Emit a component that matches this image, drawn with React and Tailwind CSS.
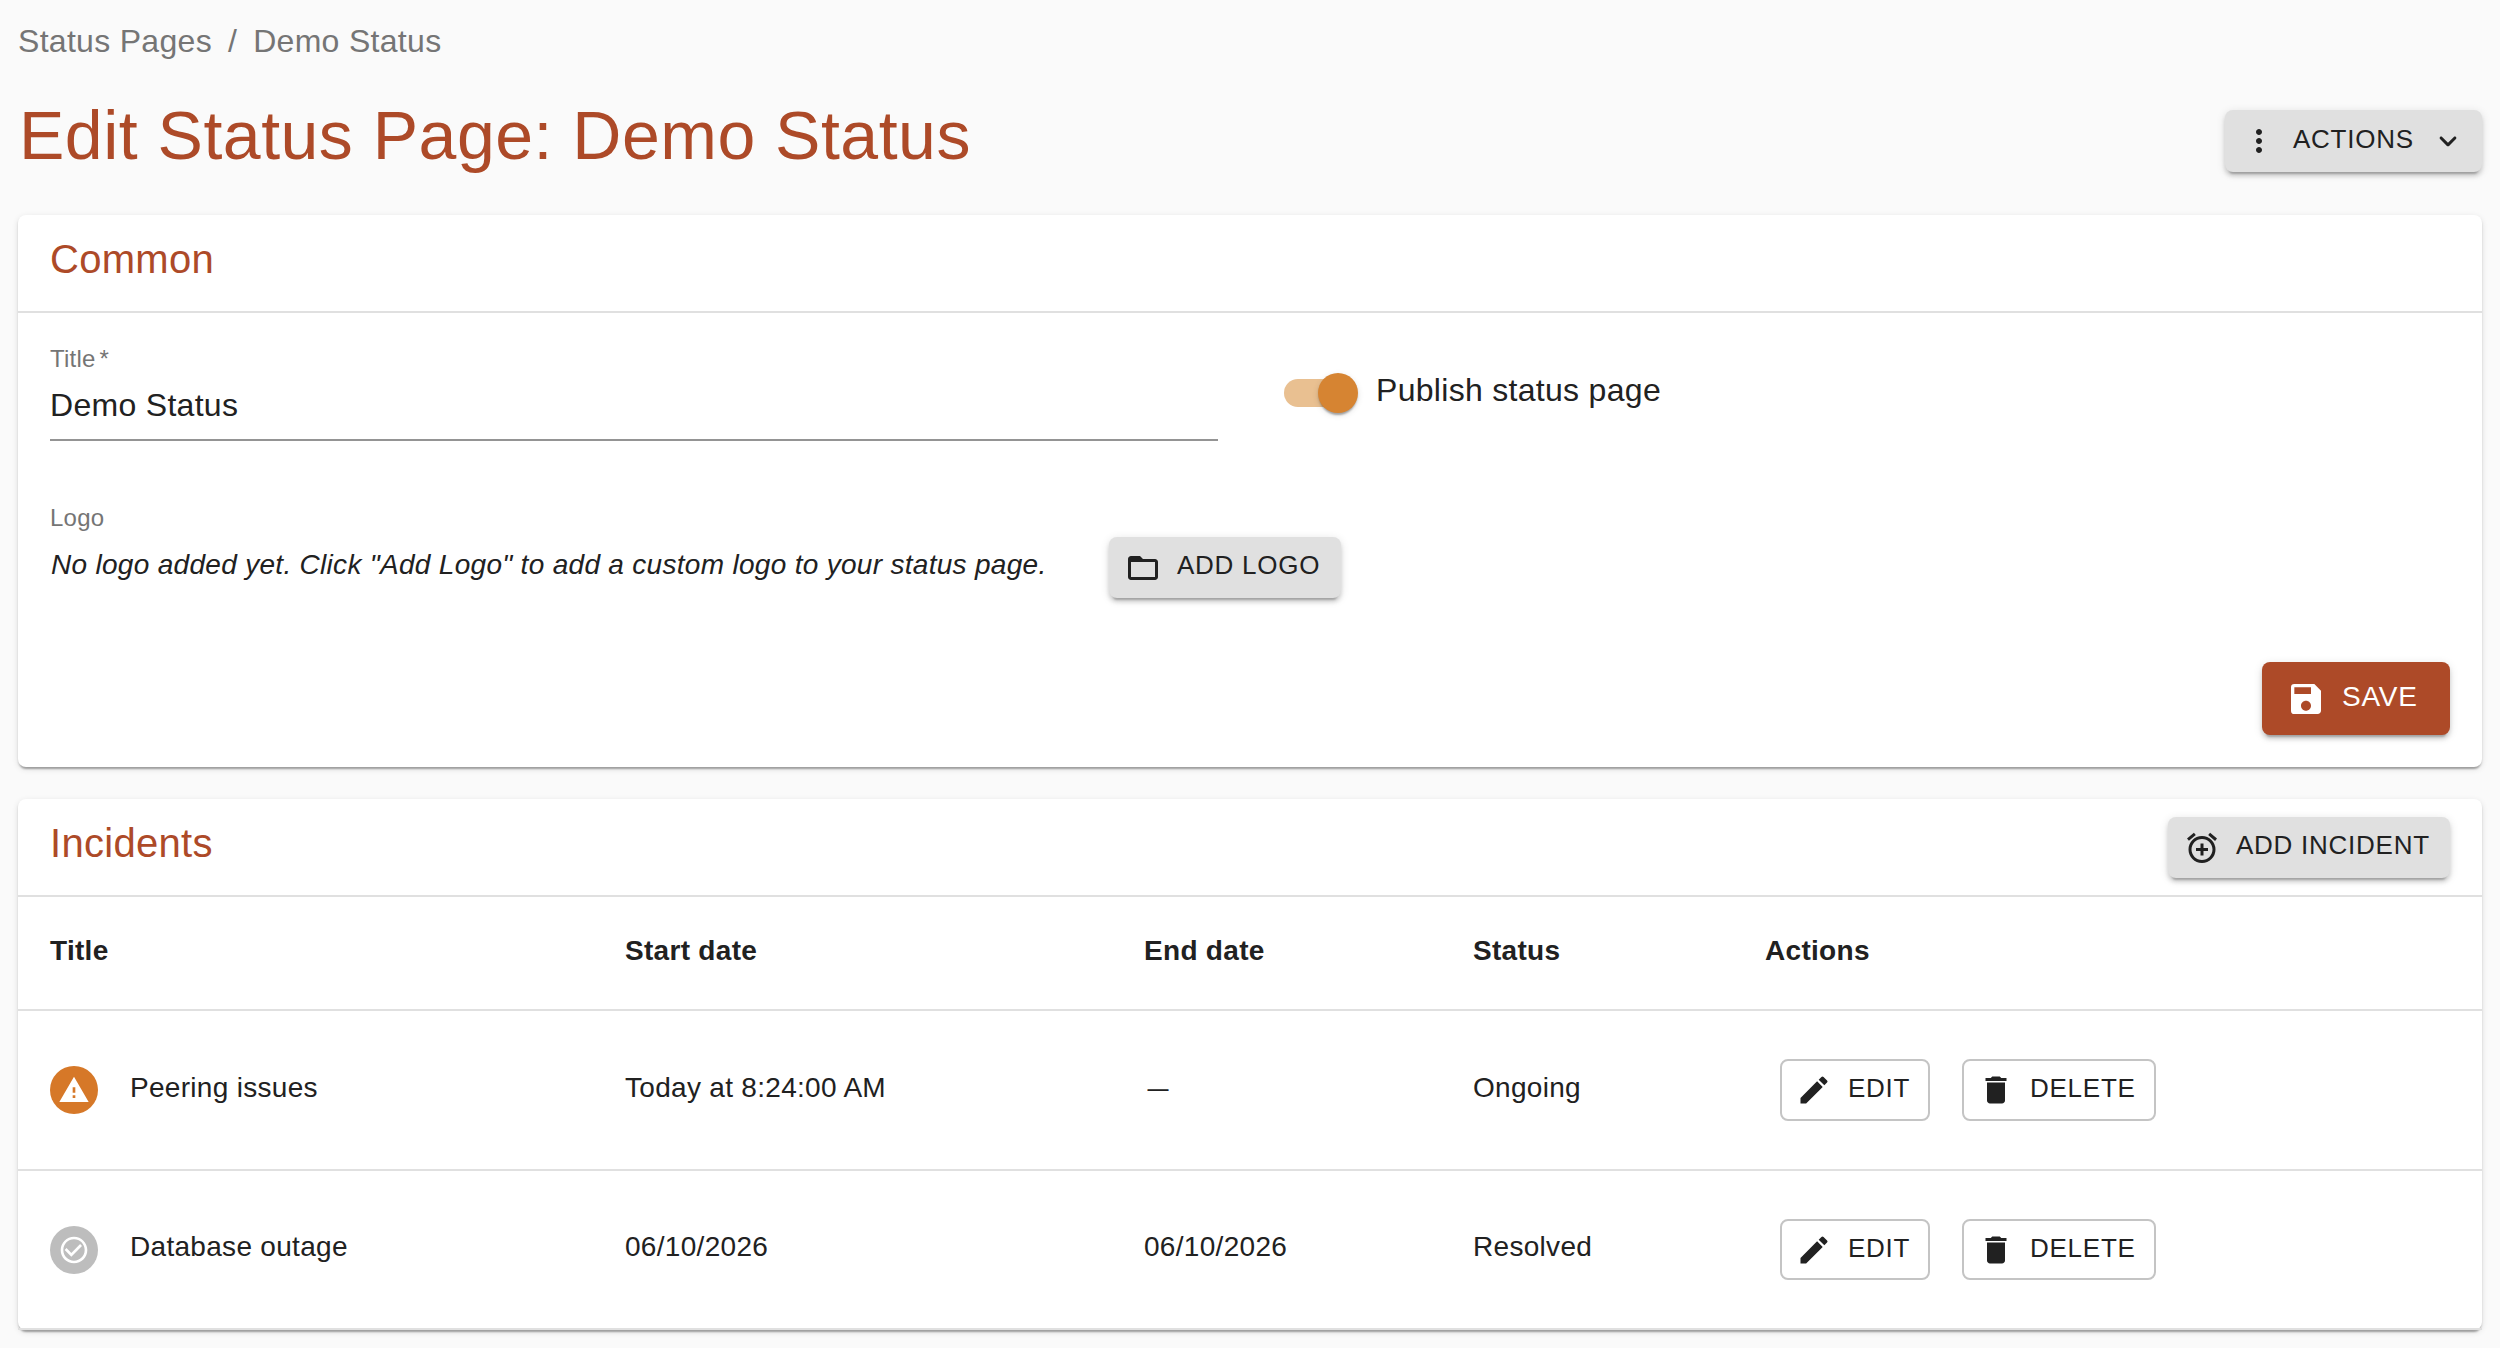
import { useState } from "react";
import {
    MdMoreVert,
    MdFolderOpen,
    MdSave,
    MdAddAlarm,
    MdWarning,
    MdCheckCircleOutline,
    MdEdit,
    MdDelete,
} from "react-icons/md";

const incidents = [
    { title: "Peering issues", start: "Today at 8:24:00 AM", end: null, status: "Ongoing", resolved: false },
    { title: "Database outage", start: "06/10/2026", end: "06/10/2026", status: "Resolved", resolved: true },
];

const columns = "grid grid-cols-[575px_519px_329px_292px_1fr] pl-8";

function ChevronDown() {
    return (
        <svg viewBox="0 0 24 24" className="size-9 fill-current">
            <path d="M8.12 9.29L12 13.17l3.88-3.88c.39-.39 1.02-.39 1.41 0s.39 1.02 0 1.41l-4.59 4.59c-.39.39-1.02.39-1.41 0L6.7 10.7a.996.996 0 010-1.41c.39-.38 1.03-.39 1.42 0z" />
        </svg>
    );
}

function ContainedButton({ icon, endIcon, className = "", children }) {
    return (
        <button
            className={`flex items-center rounded-lg bg-[#e0e0e0] px-4 text-[26px] tracking-[0.02857em] uppercase
            shadow-[0_6px_2px_-4px_rgba(0,0,0,0.2),0_4px_4px_0_rgba(0,0,0,0.14),0_2px_10px_0_rgba(0,0,0,0.12)] ${className}`}>
            {icon}
            <span className="ml-4 -mt-[4px]">{children}</span>
            {endIcon && <span className="ml-4">{endIcon}</span>}
        </button>
    );
}

function OutlinedButton({ icon, className = "", children }) {
    return (
        <button
            className={`flex items-center rounded-lg border-2 border-[#c4c4c4] pl-3.5 text-[26px]
            tracking-[0.02857em] uppercase ${className}`}>
            {icon}
            <span className="ml-4 -mt-[4px]">{children}</span>
        </button>
    );
}

function Card({ title, action, className = "", children }) {
    return (
        <section
            className={`rounded-lg bg-white
            shadow-[0_4px_2px_-2px_rgba(0,0,0,0.2),0_2px_2px_0_rgba(0,0,0,0.14),0_2px_6px_0_rgba(0,0,0,0.12)] ${className}`}>
            <div className="flex h-[98px] items-start justify-between border-b-2 border-[#e0e0e0] px-8">
                <h2 className="pt-3 text-[40px] leading-[64px] tracking-[0.0075em] text-[#ad4a28]">{title}</h2>
                {action}
            </div>
            {children}
        </section>
    );
}

function StatusAvatar({ resolved }) {
    return (
        <span
            className={`flex size-12 items-center justify-center rounded-full text-white
            ${resolved ? "bg-[#bdbdbd]" : "bg-[#d67828]"}`}>
            {resolved ? <MdCheckCircleOutline className="size-8" /> : <MdWarning className="size-8" />}
        </span>
    );
}

export default function App() {
    const [published, setPublished] = useState(true);

    return (
        <div className="h-[1348px] overflow-hidden bg-[#fafafa] px-[18px] pt-[17px] font-['Liberation_Sans',Arial,sans-serif] text-[#212121]">
            {/* Breadcrumbs */}
            <nav className="flex gap-4 text-[32px] leading-[48px] tracking-[0.00938em] text-[#757575]">
                <span>Status Pages</span>
                <span>/</span>
                <span>Demo Status</span>
            </nav>

            {/* Page header */}
            <header className="flex h-[150px] items-start justify-between">
                <h1 className="pt-[28px] pl-px text-[68px] leading-[84px] tracking-[0.00735em] text-[#ad4a28]">
                    Edit Status Page: Demo Status
                </h1>
                <ContainedButton
                    className="mt-[45px] h-[62px] w-[257px]"
                    icon={<MdMoreVert className="size-9" />}
                    endIcon={<ChevronDown />}>
                    Actions
                </ContainedButton>
            </header>

            {/* Common */}
            <Card title="Common" className="h-[552px]">
                <div className="flex px-8 pt-[30px]">
                    <div className="w-[1168px]">
                        <label className="block text-[24px] leading-[32px] tracking-[0.00938em] text-[#757575]">
                            Title<span className="ml-1">*</span>
                        </label>
                        <div className="h-[66px] border-b-2 border-[#949494] pt-[6px] text-[32px] leading-[48px] tracking-[0.00938em]">
                            Demo Status
                        </div>
                    </div>
                    <div className="ml-[66px] flex pt-[30px]">
                        <button
                            onClick={() => setPublished(!published)}
                            className={`relative mt-[6px] h-7 w-[68px] rounded-full ${published ? "bg-[#e9c091]" : "bg-[#9e9e9e]"}`}>
                            <span
                                className={`absolute -top-[6px] size-10 rounded-full
                                shadow-[0_4px_2px_-2px_rgba(0,0,0,0.2),0_2px_2px_0_rgba(0,0,0,0.14),0_2px_6px_0_rgba(0,0,0,0.12)]
                                ${published ? "-right-[6px] bg-[#d68432]" : "-left-[6px] bg-white"}`}
                            />
                        </button>
                        <span className="-mt-[7px] ml-6 text-[32px] leading-[48px] tracking-[0.00938em]">
                            Publish status page
                        </span>
                    </div>
                </div>
                <div className="flex px-8 pt-[61px]">
                    <div className="w-[995px] whitespace-nowrap">
                        <div className="text-[24px] leading-[32px] tracking-[0.00938em] text-[#757575]">Logo</div>
                        <p className="pt-[11px] pl-px text-[28px] leading-[40px] tracking-[0.01071em] italic">
                            No logo added yet. Click "Add Logo" to add a custom logo to your status page.
                        </p>
                    </div>
                    <ContainedButton
                        className="mt-[35px] ml-16 h-[61px] w-[232px]"
                        icon={<MdFolderOpen className="size-9" />}>
                        Add Logo
                    </ContainedButton>
                </div>
                <div className="flex justify-end px-8 pt-[64px]">
                    <button className="flex h-[73px] w-[188px] items-center rounded-lg bg-[#ad4a28] pl-6 text-[28px] tracking-[0.02857em] text-white uppercase shadow-[0_6px_2px_-4px_rgba(0,0,0,0.2),0_4px_4px_0_rgba(0,0,0,0.14),0_2px_10px_0_rgba(0,0,0,0.12)]">
                        <MdSave className="size-10" />
                        <span className="-mt-[4px] ml-4">Save</span>
                    </button>
                </div>
            </Card>

            {/* Incidents */}
            <Card
                title="Incidents"
                className="mt-8 h-[531px]"
                action={
                    <ContainedButton
                        className="mt-[18px] h-[61px] w-[282px] whitespace-nowrap"
                        icon={<MdAddAlarm className="size-9 shrink-0" />}>
                        Add Incident
                    </ContainedButton>
                }>
                <div className={`${columns} h-[114px] border-b-2 border-[#e0e0e0] pt-[34px] text-[28px] leading-[40px] font-bold tracking-[0.01071em]`}>
                    <div>Title</div>
                    <div>Start date</div>
                    <div>End date</div>
                    <div>Status</div>
                    <div>Actions</div>
                </div>
                {incidents.map((incident) => (
                    <div
                        key={incident.title}
                        className={`${columns} items-start border-b-2 border-[#e0e0e0] text-[28px] leading-[40px] tracking-[0.01071em]
                        ${incident.resolved ? "h-[159px] pt-[56px]" : "h-[160px] pt-[57px]"}`}>
                        <div className="flex gap-8">
                            <div className={incident.resolved ? "-mt-px" : "-mt-0.5"}>
                                <StatusAvatar resolved={incident.resolved} />
                            </div>
                            <div>{incident.title}</div>
                        </div>
                        <div>{incident.start}</div>
                        <div>{incident.end ?? <span className="inline-block scale-x-75">—</span>}</div>
                        <div>{incident.status}</div>
                        <div className={`flex gap-8 pl-[15px] ${incident.resolved ? "-mt-2" : "-mt-[9px]"}`}>
                            <OutlinedButton
                                className={`w-[150px] ${incident.resolved ? "h-[61px]" : "h-[62px]"}`}
                                icon={<MdEdit className="size-9" />}>
                                Edit
                            </OutlinedButton>
                            <OutlinedButton
                                className={`w-[194px] ${incident.resolved ? "h-[61px]" : "h-[62px]"}`}
                                icon={<MdDelete className="size-9" />}>
                                Delete
                            </OutlinedButton>
                        </div>
                    </div>
                ))}
            </Card>
        </div>
    );
}
